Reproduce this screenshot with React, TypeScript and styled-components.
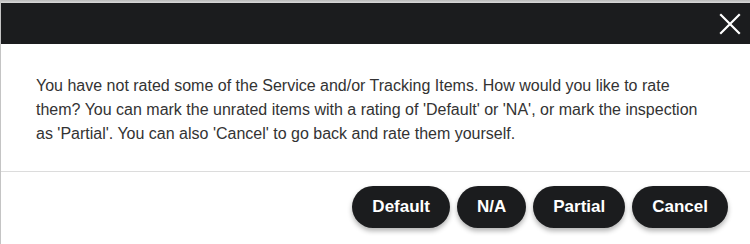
import styled, { createGlobalStyle } from "styled-components";

const GlobalStyle = createGlobalStyle`
    html, body {
        margin: 0;
        padding: 0;
        background: #ffffff;
    }

    body {
        font-family: "Liberation Sans", Arial, Helvetica, sans-serif;
    }
`;

const buttons = ["Default", "N/A", "Partial", "Cancel"];

const App = () => {
    return (
        <>
            <GlobalStyle />
            <Dialog>
                <TopEdge />
                <Header>
                    <CloseButton aria-label="Close">
                        <svg width="22" height="22" viewBox="0 0 22 22">
                            <path
                                d="M2 2 L20 20 M20 2 L2 20"
                                stroke="#ffffff"
                                strokeWidth="2.2"
                                strokeLinecap="square"
                            />
                        </svg>
                    </CloseButton>
                </Header>
                <Body>
                    You have not rated some of the Service and/or Tracking
                    Items. How would you like to rate them? You can mark the
                    unrated items with a rating of 'Default' or 'NA', or mark
                    the inspection as 'Partial'. You can also 'Cancel' to go
                    back and rate them yourself.
                </Body>
                <Footer>
                    {buttons.map((label) => (
                        <PillButton key={label}>{label}</PillButton>
                    ))}
                </Footer>
            </Dialog>
        </>
    );
};

const Dialog = styled.div`
    display: flex;
    flex-direction: column;
    width: 750px;
    height: 244px;
    box-sizing: border-box;
    border-left: 1px solid #c4c4c4;
    background: #ffffff;
    overflow: hidden;
`;

const TopEdge = styled.div`
    height: 3px;
    background: linear-gradient(#b9b9b9, #dadada);
`;

const Header = styled.div`
    display: flex;
    align-items: center;
    justify-content: flex-end;
    height: 41px;
    padding-right: 6px;
    background: #1b1c1e;
`;

const CloseButton = styled.button`
    display: flex;
    align-items: center;
    justify-content: center;
    padding: 0;
    width: 28px;
    height: 28px;
    border: none;
    background: transparent;
    cursor: pointer;
`;

const Body = styled.p`
    margin: 0;
    padding: 30px 36px 25px 35px;
    border-bottom: 1px solid #dcdcdc;
    font-size: 16px;
    line-height: 24px;
    color: #333333;
`;

const Footer = styled.div`
    display: flex;
    justify-content: flex-end;
    gap: 7px;
    padding: 14px 22px 0 0;
`;

const PillButton = styled.button`
    height: 42px;
    padding: 0 20px;
    border: none;
    border-radius: 21px;
    background: #1b1c1e;
    color: #ffffff;
    font-family: "Liberation Sans", Arial, Helvetica, sans-serif;
    font-size: 17px;
    font-weight: 700;
    box-shadow: 0 3px 5px rgba(0, 0, 0, 0.3);
    cursor: pointer;
`;

export default App;
